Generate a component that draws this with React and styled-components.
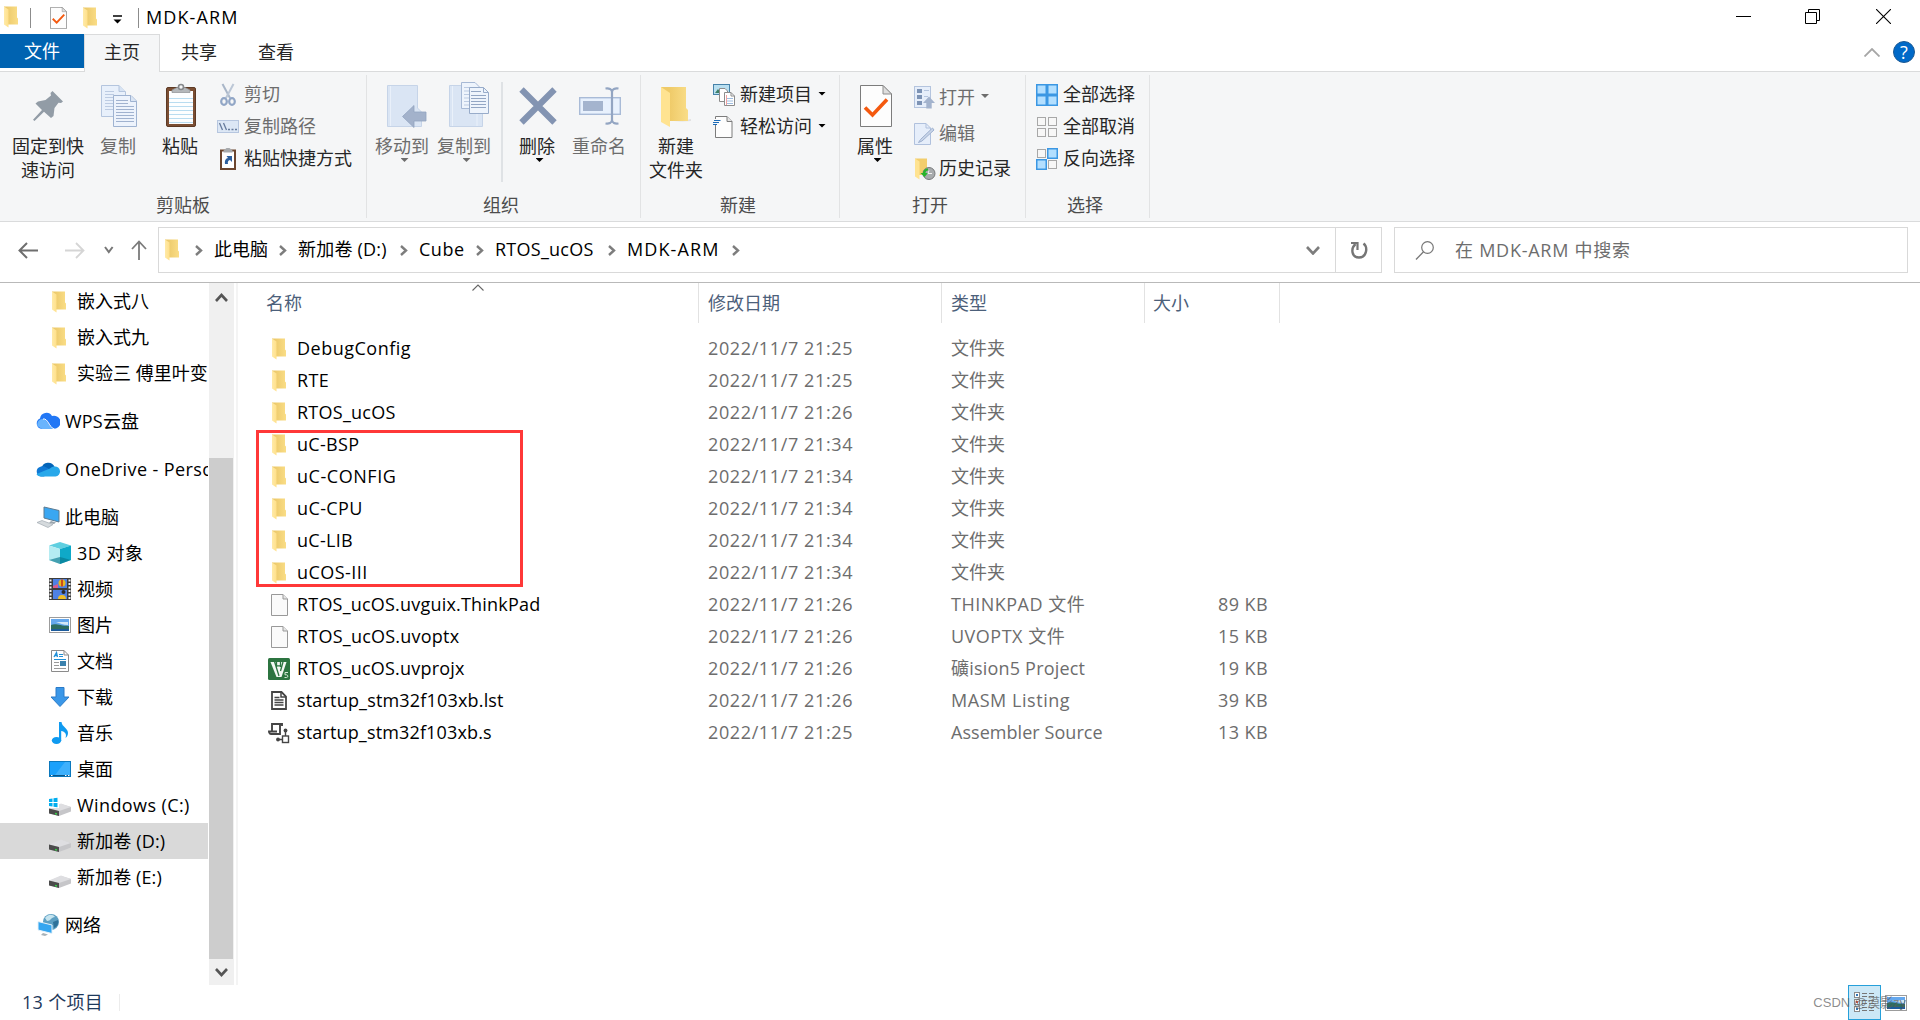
import React from 'react';
import styled, { createGlobalStyle } from 'styled-components';

const GlobalStyle = createGlobalStyle`
  * {
    box-sizing: border-box;
  }

  body {
    margin: 0;
    background: #fff;
    overflow: hidden;
  }

  svg {
    display: block;
    flex: none;
  }
`;

const Window = styled.div`
  width: 1920px;
  height: 1020px;
  display: flex;
  flex-direction: column;
  background: #fff;
  color: #000;
  font-family: 'Open Sans', 'Noto Sans CJK SC', sans-serif;
  font-size: 18px;
  line-height: 24px;
  white-space: nowrap;
  overflow: hidden;
`;

/* ---------- title bar ---------- */

const TitleBar = styled.header`
  height: 34px;
  flex: none;
  display: flex;
  align-items: center;
  padding-left: 4px;
`;

const TitleSeparator = styled.span`
  width: 1px;
  height: 20px;
  margin: 2px ${(p) => p.$right}px 0 ${(p) => p.$left}px;
  background: #8c8c8c;
`;

const QuickIcon = styled.span`
  margin: ${(p) => p.$top ?? 2}px ${(p) => p.$right || 0}px 0 0;
`;

const Title = styled.span`
  letter-spacing: ${(p) => p.$track || 0}px;
`;

const WindowButtons = styled.div`
  margin-left: auto;
  display: flex;
  padding: 0 29px 1px 0;
`;

const WindowButton = styled.span`
  margin-left: ${(p) => p.$left || 0}px;
`;

/* ---------- tabs ---------- */

const TabBar = styled.nav`
  height: 38px;
  flex: none;
  display: flex;
  align-items: flex-start;
  border-bottom: 1px solid #dadbdc;
`;

const FileTab = styled.div`
  width: 84px;
  height: 34px;
  background: #0063b1;
  color: #fff;
  text-align: center;
  line-height: 35px;
`;

const Tab = styled.div`
  width: ${(p) => p.$width}px;
  height: 38px;
  line-height: 35px;
  text-align: center;
  color: #262626;
  border: 1px solid ${(p) => (p.$active ? '#dadbdc' : 'transparent')};
  border-bottom: 0;
  background: ${(p) => (p.$active ? '#f5f6f7' : 'transparent')};
`;

const TabTools = styled.div`
  margin: 7px 5px 0 auto;
  display: flex;
  align-items: center;
  gap: 13px;
`;

const HelpBadge = styled.span`
  width: 22px;
  height: 22px;
  border-radius: 50%;
  border: 1px solid #1d5a94;
  background: #0069c8;
  color: #fff;
  font-size: 18px;
  line-height: 20px;
  text-align: center;
`;

/* ---------- ribbon ---------- */

const Ribbon = styled.section`
  height: 150px;
  flex: none;
  display: flex;
  background: #f5f6f7;
  border-bottom: 1px solid #dadbdc;
  padding: 3px 0;
`;

const Group = styled.div`
  width: ${(p) => p.$width}px;
  display: flex;
  flex-direction: column;
  border-right: 1px solid #e2e3e4;
`;

const GroupBody = styled.div`
  height: 118px;
  display: flex;
  padding: 4px 0 0 ${(p) => p.$left}px;
`;

const GroupLabel = styled.div`
  padding-right: ${(p) => p.$inset || 0}px;
  text-align: center;
  color: #4c4c4c;
`;

const BigButton = styled.div`
  width: ${(p) => p.$width}px;
  flex: none;
  display: flex;
  flex-direction: column;
  align-items: center;
  padding-top: 3px;
  color: ${(p) => (p.$off ? '#6d6d6d' : '#262626')};
`;

const BigIcon = styled.div`
  height: 52px;
  padding-left: ${(p) => p.$inset || 0}px;
`;

const BigLabel = styled.div`
  text-align: center;
  white-space: pre-line;
`;

const Caret = styled.i`
  width: 8px;
  height: 4px;
  margin: ${(p) => p.$margin || '0'};
  background: ${(p) => (p.$off ? '#6d6d6d' : '#000')};
  clip-path: polygon(0 0, 100% 0, 50% 100%);
`;

const Divider = styled.div`
  width: 2px;
  height: 100px;
  margin: 3px 4px 0 7px;
  background: #dfe2e5;
`;

const SmallColumn = styled.div`
  margin-left: ${(p) => p.$left}px;
`;

const SmallButton = styled.div`
  height: ${(p) => p.$height || 32}px;
  display: flex;
  align-items: center;
  gap: ${(p) => p.$gap || 5}px;
  color: ${(p) => (p.$off ? '#6d6d6d' : '#262626')};
`;

const SmallLabel = styled.span`
  padding-bottom: 2px;
`;

/* ---------- address row ---------- */

const NavRow = styled.div`
  height: 61px;
  flex: none;
  display: flex;
  align-items: flex-start;
  padding-top: 5px;
  border-bottom: 1px solid #b9b9b9;
`;

const NavArrows = styled.div`
  width: 158px;
  height: 46px;
  display: flex;
  align-items: center;
  padding-left: 18px;
`;

const AddressBox = styled.div`
  width: 1224px;
  height: 46px;
  display: flex;
  align-items: center;
  border: 1px solid #d9d9d9;
  padding-left: 6px;
`;

const Crumb = styled.span`
  width: ${(p) => p.$width}px;
  padding-bottom: 2px;
  letter-spacing: ${(p) => p.$track || 0}px;
`;

const CrumbChevron = styled.span`
  width: ${(p) => p.$width || 16}px;
  padding-top: ${(p) => p.$top ?? 1}px;
`;

const AddressTools = styled.div`
  margin-left: auto;
  height: 44px;
  display: flex;
  align-items: center;
`;

const Refresh = styled.div`
  width: 46px;
  height: 44px;
  margin-left: 15px;
  display: flex;
  align-items: center;
  justify-content: center;
  border-left: 1px solid #d9d9d9;
`;

const SearchBox = styled.div`
  width: 514px;
  height: 46px;
  margin-left: 12px;
  padding-left: 20px;
  display: flex;
  align-items: center;
  gap: 20px;
  border: 1px solid #d9d9d9;
  color: #6d6d6d;
  letter-spacing: 0.75px;
`;

/* ---------- body ---------- */

const Body = styled.main`
  height: 702px;
  flex: none;
  display: flex;
`;

const Tree = styled.aside`
  width: 208px;
  height: 702px;
  overflow: hidden;
`;

const TreeRow = styled.div`
  height: 36px;
  display: flex;
  align-items: center;
  margin-top: ${(p) => (p.$spaced ? 12 : 0)}px;
  padding-left: ${(p) => (p.$root ? 36 : 48)}px;
  background: ${(p) => (p.$selected ? '#d9d9d9' : 'transparent')};
`;

const TreeIcon = styled.div`
  width: 29px;
  flex: none;
  padding: ${(p) => (p.$folder ? '1px 0 0 4px' : '0')};
`;

const TreeText = styled.span`
  letter-spacing: ${(p) => p.$track || 0}px;
`;

const ScrollBar = styled.div`
  width: 25px;
  height: 702px;
  margin-left: 1px;
  display: flex;
  flex-direction: column;
  align-items: center;
  justify-content: space-between;
  padding: 10px 1px 8px 0;
  background: #f0f0f0;
`;

const Thumb = styled.div`
  width: 24px;
  height: 501px;
  margin: auto 0 9px;
  background: #cdcdcd;
`;

const Splitter = styled.div`
  width: 2px;
  margin-left: 2px;
  background: #f4f4f4;
`;

const FileArea = styled.section`
  position: relative;
  flex: 1;
`;

const HeaderRow = styled.div`
  height: 40px;
  display: flex;
  color: #4c607a;
`;

const HeaderCell = styled.div`
  width: ${(p) => p.$width}px;
  height: 40px;
  line-height: 40px;
  padding-left: ${(p) => p.$left}px;
  border-right: 1px solid #e2e2e2;
`;

const SortMark = styled.span`
  position: absolute;
  left: 234px;
  top: 1px;
`;

const Rows = styled.div`
  padding-top: 9px;
`;

const FileRow = styled.div`
  height: 32px;
  display: grid;
  grid-template-columns: 29px 411px 243px 203px 114px;
  align-items: center;
  padding-left: 30px;
  color: #6d6d6d;
`;

const FileIcon = styled.span`
  width: 22px;
  padding-top: 1px;
  display: flex;
  justify-content: center;
`;

const FileName = styled.span`
  color: #000;
  letter-spacing: ${(p) => p.$track}px;
`;

const FileDate = styled.span`
  letter-spacing: 0.62px;
`;

const FileType = styled.span`
  letter-spacing: ${(p) => p.$track || 0}px;
`;

const FileSize = styled.span`
  text-align: right;
  letter-spacing: 0.4px;
`;

const Highlight = styled.div`
  position: absolute;
  left: 18px;
  top: 147px;
  width: 267px;
  height: 157px;
  border: 3px solid #ff3838;
`;

/* ---------- status bar ---------- */

const StatusBar = styled.footer`
  position: relative;
  height: 35px;
  flex: none;
  display: flex;
  align-items: center;
  color: #1e395b;
  padding-left: 22px;
`;

const ItemCount = styled.span`
  padding-bottom: 2px;
  letter-spacing: 0.3px;
`;

const StatusDivider = styled.span`
  width: 1px;
  height: 17px;
  margin-left: 16px;
  background: #ececec;
`;

const ViewButtons = styled.div`
  margin-left: auto;
  height: 35px;
  display: flex;
  align-items: center;
  gap: 3px;
  padding-right: 12px;
`;

const DetailsView = styled.span`
  width: 33px;
  height: 35px;
  display: flex;
  align-items: center;
  justify-content: center;
  background: #cce8f6;
  border: 1px solid #26a0da;
`;

const Watermark = styled.span`
  position: absolute;
  right: 14px;
  top: 6px;
  font-family: 'Liberation Sans', 'Noto Sans CJK SC', sans-serif;
  font-size: 13px;
  color: rgba(90, 90, 90, 0.7);
`;

/* ---------- icons ---------- */

const Svg = ({ w, h, children, vw, vh }) => (
  <svg width={w} height={h} viewBox={`0 0 ${vw || w} ${vh || h}`} fill="none">
    {children}
  </svg>
);

const FolderIcon = () => (
  <Svg w={15} h={22}>
    <defs>
      <linearGradient id="folderBack" x1="0" x2="1">
        <stop offset="0" stopColor="#e9c565" />
        <stop offset="1" stopColor="#fadd86" />
      </linearGradient>
      <linearGradient id="folderFront" x1="0" x2="1">
        <stop offset="0" stopColor="#ffeaa8" />
        <stop offset="1" stopColor="#ffe08a" />
      </linearGradient>
    </defs>
    <path d="M0 0.5H13V11.5L14 12.5V18.5H4L0 8Z" fill="url(#folderBack)" />
    <path d="M0 0.5L4.5 3.5V21.5L0 18.5Z" fill="url(#folderFront)" />
  </Svg>
);

const PageIcon = () => (
  <Svg w={17} h={22}>
    <path d="M0.5 0.5H12L16.5 5V21.5H0.5Z" fill="#fafafa" stroke="#999" />
    <path d="M12 0.5V5H16.5" fill="#e6e6e6" stroke="#999" />
  </Svg>
);

const CheckPage = ({ w, h }) => (
  <Svg w={w} h={h} vw={32} vh={42}>
    <path d="M0.7 0.7H23L31.3 9V41.3H0.7Z" fill="#fdfdfd" stroke="#7c7c7c" strokeWidth="1.3" />
    <path d="M23 0.7V9H31.3Z" fill="#dedede" stroke="#8e8e8e" />
    <path d="M5 22.5L12.5 30L27 14.5" stroke="#f4590f" strokeWidth="3.6" />
  </Svg>
);

const PropertiesIcon = () => (
  <Svg w={32} h={48}>
    <path d="M0.5 3.5H23L31.5 12V44.5H0.5Z" fill="#fdfdfd" stroke="#7c7c7c" />
    <path d="M23 3.5V12H31.5Z" fill="#dedede" stroke="#8e8e8e" />
    <path d="M5 25.5L12.5 33L27 17.5" stroke="#f4590f" strokeWidth="3.6" />
  </Svg>
);

const PinIcon = () => (
  <Svg w={30} h={48}>
    <path d="M19.5 9L30 19.5L28 21L25.5 20.8L21.5 26L20.5 34L18 36L11 29.8L1.5 39L0 37.8L9 28L2.5 21.5L5 19.5L12.5 18L18 13.5L17.5 11Z" fill="#929ca6" />
  </Svg>
);

const Lines = ({ x, y, w, n, step, color }) =>
  Array.from({ length: n }, (_, i) => (
    <path key={i} d={`M${x} ${y + i * step}h${w}`} stroke={color} />
  ));

const CopyIcon = () => (
  <Svg w={36} h={48}>
    <path d="M0.5 3.5H18L24.5 10V34.5H0.5Z" fill="#e8f0fb" stroke="#b4c5de" />
    <path d="M18 3.5V9.5H24.5" fill="#d7e3f3" stroke="#b4c5de" />
    <Lines x={4} y={9.5} w={9} n={7} step={3} color="#bccbe2" />
    <path d="M12.5 13.5H30L35.5 19V44.5H12.5Z" fill="#edf3fc" stroke="#9fb3d1" />
    <path d="M29.5 13.5V19.5H35.5" fill="#dae5f4" stroke="#9fb3d1" />
    <Lines x={15} y={18.5} w={12} n={2} step={3} color="#a0b2cf" />
    <Lines x={15} y={24.5} w={18} n={6} step={3} color="#a0b2cf" />
  </Svg>
);

const PasteIcon = () => (
  <Svg w={30} h={48}>
    <rect x="0.5" y="5.5" width="29" height="39" rx="1.5" fill="#7b4e33" stroke="#5d3a25" />
    <rect x="3" y="9" width="24" height="33" fill="#fdfeff" />
    <Lines x={3} y={16.5} w={24} n={7} step={4} color="#b9dcf0" />
    <path d="M6 10.5V8L11 5.5H19L24 8V10.5Z" fill="#b5b8bb" stroke="#8d8f92" strokeWidth="0.7" />
    <circle cx="15" cy="5" r="2.5" fill="#f5f6f7" stroke="#85888b" strokeWidth="1.6" />
  </Svg>
);

const CutIcon = () => (
  <Svg w={22} h={24}>
    <path d="M5.500 1L13 15" stroke="#a9b6c8" strokeWidth="2" />
    <path d="M16.500 1L9 15" stroke="#bcc7d6" strokeWidth="2" />
    <ellipse cx="7" cy="18.500" rx="2.800" ry="3.400" stroke="#91a6c6" strokeWidth="2.200" />
    <ellipse cx="15" cy="18.500" rx="2.800" ry="3.400" stroke="#91a6c6" strokeWidth="2.200" />
  </Svg>
);

const PathIcon = () => (
  <Svg w={22} h={14}>
    <rect x="0.5" y="0.5" width="21" height="12" fill="#dce7f5" stroke="#b6c6df" />
    <path d="M2.500 3L5.500 10M6.500 3L9.500 10" stroke="#667b9c" strokeWidth="1.300" />
    <path d="M11 9.500h2M14.500 9.500h2M18 9.500h2" stroke="#667b9c" strokeWidth="1.600" />
  </Svg>
);

const PasteLinkIcon = () => (
  <Svg w={22} h={24}>
    <rect x="4" y="3.500" width="14" height="18.500" fill="#fff" stroke="#6b452e" strokeWidth="2" />
    <path d="M6.500 5.500V3.500L9.500 1H12.500L15.500 3.500V5.500Z" fill="#a7aaad" />
    <path d="M8 17C7.500 13 9 11.500 11 11L9.500 9H15V15L13 13C11 13.500 10.500 15 11 17Z" fill="#2c5f9e" />
  </Svg>
);

const MoveIcon = () => (
  <Svg w={40} h={48}>
    <path d="M0.500 3.500H30.500V26L34.500 30V44.500H0.500Z" fill="#dae5f4" stroke="#c6d4e8" />
    <path d="M3.500 4V44" stroke="#e9f0fa" />
    <path d="M15.500 34.500L27 23.500V30H39V39H27V45.500Z" fill="#a3b2cb" stroke="#93a4c0" strokeWidth="0.800" />
  </Svg>
);

const CopyToIcon = () => (
  <Svg w={40} h={48}>
    <path d="M0.500 3.500H26.500V24H33.500V44.500H0.500Z" fill="#dae5f4" stroke="#c6d4e8" />
    <path d="M3.500 4V44M28 32V44" stroke="#eaf1fa" />
    <path d="M12.500 0.500H26L31.500 6V26.500H12.500Z" fill="#eef4fc" stroke="#a7b9d5" />
    <Lines x={15} y={5.5} w={9} n={6} step={3.5} color="#bccbe2" />
    <path d="M20.500 5.500H34.500L39.500 10.500V31.500H20.500Z" fill="#eef4fc" stroke="#98acca" />
    <path d="M34.500 5.500V10.500H39.500" stroke="#98acca" />
    <Lines x={22} y={9.5} w={10} n={1} step={3} color="#93a6c4" />
    <Lines x={22} y={13.5} w={15} n={5} step={3} color="#93a6c4" />
  </Svg>
);

const DeleteIcon = () => (
  <Svg w={38} h={48}>
    <path d="M2.500 7.500L35.500 40.500M35.500 7.500L2.500 40.500" stroke="#8394b2" strokeWidth="6.200" />
  </Svg>
);

const RenameIcon = () => (
  <Svg w={42} h={48}>
    <rect x="0.700" y="15.700" width="40.600" height="16.600" fill="#e8f1fd" stroke="#a9bbd7" strokeWidth="1.400" />
    <rect x="4" y="19" width="20" height="10" fill="#a4b4ce" />
    <path d="M26.500 6.500C30 6 33 7 33 10C33 7 36 6 39.500 6.500M33 9V39M26.500 41.500C30 42 33 41 33 38C33 41 36 42 39.500 41.500" stroke="#93a5c2" strokeWidth="2.200" />
  </Svg>
);

const BigFolder = () => (
  <Svg w={32} h={48}>
    <defs>
      <linearGradient id="bigBack" x1="0" x2="1">
        <stop offset="0.300" stopColor="#efca68" />
        <stop offset="1" stopColor="#f9dd88" />
      </linearGradient>
    </defs>
    <path d="M22 39L31 37V39L14 40Z" fill="#e2e2e2" />
    <path d="M1 5H26V26L28 28V39H9L1 20Z" fill="url(#bigBack)" />
    <path d="M1 5L10 11V45L1 40Z" fill="#ffe391" />
  </Svg>
);

const NewItemIcon = () => (
  <Svg w={22} h={22}>
    <rect x="0.500" y="0.500" width="16" height="10" fill="#b9dff0" stroke="#4682a9" />
    <path d="M2 9L5 5L8 9Z" fill="#3d7f68" />
    <path d="M6.500 4.500H12L14.500 7V17.500H6.500Z" fill="#fff" stroke="#8c8c8c" />
    <path d="M11.500 8.500H18L21.500 12V21.500H11.500Z" fill="#fff" stroke="#8c8c8c" />
    <path d="M18 8.500V12H21.500" stroke="#8c8c8c" />
    <Lines x={13} y={14.5} w={7} n={3} step={2.5} color="#9fbde0" />
    <path d="M13.500 11V21" stroke="#f0a0a0" />
  </Svg>
);

const EasyAccessIcon = () => (
  <Svg w={22} h={22}>
    <path d="M2.500 0.500H14L19 5.500V21.500H2.500Z" fill="#fdfdfd" stroke="#7c7c7c" />
    <path d="M14 0.500V5.500H19" stroke="#7c7c7c" fill="#e5e5e5" />
    <path d="M1 3h5v6h-5z" fill="#f9f9fa" />
    <path d="M1 4.500h6.500M0 6.500h6M0 8.500h4" stroke="#1a6bb8" strokeWidth="1.200" />
  </Svg>
);

const OpenIcon = () => (
  <Svg w={22} h={23}>
    <rect x="0.500" y="0.500" width="16" height="21" fill="#e6eefa" stroke="#b4c4de" />
    <path d="M3 3h5v4h-5zM3 9h5v4h-5zM3 15h5v4h-5z" fill="#7d93b5" />
    <path d="M10 4.500h5M10 10.500h4" stroke="#b4c4de" />
    <path d="M15 10.500L21 17H17.700V22.500H12.300V17H9Z" fill="#a3b3cd" />
  </Svg>
);

const EditIcon = () => (
  <Svg w={22} h={22}>
    <path d="M0.500 0.500H12L16.500 5V21.500H0.500Z" fill="#e6eefa" stroke="#b0c1dd" />
    <path d="M12 0.500V5H16.500" stroke="#b0c1dd" />
    <path d="M18.500 5L6.500 16.500L4.500 19.500L8 18L20 7Z" fill="#c9d5e8" stroke="#9db0cf" />
  </Svg>
);

const HistoryIcon = () => (
  <Svg w={22} h={22}>
    <path d="M1 0.500H13V17H5Z" fill="#f2cd6c" />
    <path d="M1 0.500L5.500 3.500V21.500L1 18.500Z" fill="#ffe391" />
    <circle cx="15" cy="15.500" r="6" fill="#a8abad" stroke="#77797b" />
    <path d="M12 15.500h6M15 12.500l-1 3" stroke="#f2f2f2" />
    <path d="M14 10.500C10.500 10.500 9 13 9 15H6.500L10.500 19L14 15H11.500C11.500 13.500 12.500 12.500 14 12.500Z" fill="#27b42c" />
  </Svg>
);

const SelectIcon = ({ on }) => (
  <Svg w={22} h={22}>
    {[0, 1, 2, 3].map((i) => {
      const active = on.includes(i);
      return (
        <rect
          key={i}
          x={(i % 2) * 11 + (active ? 0.75 : 1.5)}
          y={Math.floor(i / 2) * 11 + (active ? 0.75 : 1.5)}
          width={active ? 9.5 : 8}
          height={active ? 9.5 : 8}
          fill={active ? '#b3dfff' : '#f7f7f7'}
          stroke={active ? '#3b97e3' : '#a8a8a8'}
          strokeWidth={active ? 1.5 : 1}
        />
      );
    })}
  </Svg>
);

const Chevron = ({ d, w, h, color = '#7d7d7d', sw = 2 }) => (
  <Svg w={w} h={h}>
    <path d={d} stroke={color} strokeWidth={sw} />
  </Svg>
);

const WpsIcon = () => (
  <Svg w={24} h={24}>
    <path d="M6 20A5.500 5.500 0 0 1 4 9.500A6.500 6.500 0 0 1 16 7A6.500 6.500 0 0 1 20 19.500Z" fill="#2277f5" />
    <path d="M1.500 17A5.500 5.500 0 0 1 6 10C11 9 13 17 17 20H6Z" fill="#69b4fd" />
    <path d="M7 10C12 9 13 18 18 20" stroke="#fff" strokeWidth="1" />
  </Svg>
);

const OneDriveIcon = () => (
  <Svg w={24} h={24}>
    <path d="M5.500 11A7 7 0 0 1 18.500 9.500L16 16Z" fill="#0364b8" />
    <path d="M5 19.500A5 5 0 0 1 4.500 9.700C8 8.500 10 10 16 14L8 19.500Z" fill="#0f78d4" />
    <path d="M18.500 9.500A5 5 0 0 1 19.500 19.500H5C2.500 19.500 1 18.500 0.500 17L14 11.500C15.500 10 17 9.500 18.500 9.500Z" fill="#28a8ea" />
  </Svg>
);

const PcIcon = () => (
  <Svg w={24} h={24}>
    <path d="M8 2L23 5.500V17L8 13Z" fill="#3aa7f2" stroke="#5d7a90" />
    <path d="M15 16L20 17.500L18 19L13 18Z" fill="#9aa5ad" />
    <path d="M1 17.500L6 15.500L17 19.500L12 22.500Z" fill="#d5dadd" stroke="#a2abb1" strokeWidth="0.700" />
  </Svg>
);

const CubeIcon = () => (
  <Svg w={24} h={24}>
    <path d="M12 1L23 4.500L12 8L1 4.500Z" fill="#5fcfe0" />
    <path d="M1 4.500L12 8V23L1 19Z" fill="#b5ecf2" />
    <path d="M23 4.500L12 8V23L23 19Z" fill="#0fa9c8" />
    <path d="M12 16L23 19L12 23L1 19Z" fill="#08788d" opacity="0.650" />
  </Svg>
);

const VideoIcon = () => (
  <Svg w={24} h={24}>
    <rect x="1" y="1" width="22" height="22" fill="#3d3d3d" />
    <rect x="5" y="2" width="14" height="9" fill="#4f81e4" />
    <rect x="5" y="13" width="14" height="9" fill="#4f81e4" />
    <path d="M2.500 2.500V22M21.500 2.500V22" stroke="#f2f2f2" strokeWidth="2" strokeDasharray="2 1.500" />
    <circle cx="14" cy="6" r="3.500" fill="#e8b820" />
    <path d="M14 2.500V9.500" stroke="#c52a1a" strokeWidth="1.500" />
    <path d="M5 9L10 7V11H5Z" fill="#da5d8c" />
    <circle cx="15.500" cy="15" r="2" fill="#2a2a2a" />
    <path d="M10 22A4 4 0 0 1 18 22Z" fill="#f0be24" />
  </Svg>
);

const PictureIcon = () => (
  <Svg w={24} h={18}>
    <rect x="1.500" y="1.500" width="21" height="15" fill="#fff" stroke="#9c9c9c" />
    <rect x="3" y="3" width="18" height="12" fill="#65a8ee" />
    <path d="M3 9C8 7 12 10 21 10V15H3Z" fill="#2d6d62" />
    <path d="M8 6h12v3c-5 0-8-2-12-3z" fill="#d3e8f7" />
    <path d="M3 13h18v2H3Z" fill="#1d5c9c" />
  </Svg>
);

const DocumentIcon = () => (
  <Svg w={24} h={24}>
    <path d="M3.500 1.500H16L20.500 6V22.500H3.500Z" fill="#fff" stroke="#8b8b8b" />
    <path d="M16 1.500V6H20.500" stroke="#8b8b8b" />
    <path d="M6 8L8.500 3.500L9.500 8M7 6.500H9" stroke="#2090d8" strokeWidth="1.300" />
    <path d="M11 5.500h4M11 7.500h4M6 10.500h12" stroke="#2090d8" />
    <path d="M6 13.500h5M6 16.500h5M6 19.500h12" stroke="#9a9a9a" />
    <rect x="12" y="12" width="6" height="5" fill="#3b81ad" />
  </Svg>
);

const DownloadIcon = () => (
  <Svg w={24} h={24}>
    <path d="M8 2.500H16V12H21L12 21.500L3 12H8Z" fill="#3a97e8" stroke="#2a7bc8" />
  </Svg>
);

const MusicIcon = () => (
  <Svg w={24} h={24}>
    <ellipse cx="8.500" cy="19.500" rx="4.700" ry="3.500" fill="#0f9af0" />
    <path d="M11 1H13.500C14 6 20 7 20 12C20 14.500 18.500 16.500 17.500 17C19 13 17 10.500 13.200 10V20H11Z" fill="#0f9af0" />
  </Svg>
);

const DesktopIcon = () => (
  <Svg w={24} h={18}>
    <rect x="1.500" y="1.500" width="21" height="15" fill="#1ba1fb" stroke="#0b78bd" />
    <path d="M7 15L17 2H22V15Z" fill="#3eb0fc" />
    <path d="M2 15.500H22" stroke="#0a5587" />
    <path d="M3 15.500h1.500M17 15.500h1.500M20 15.500h1.500" stroke="#fff" />
  </Svg>
);

const DriveIcon = ({ system }) => (
  <Svg w={24} h={24}>
    <path d="M1 16L13 11L23 14V18.500L11 23L1 20Z" fill="#c6c6c9" />
    <path d="M1 15.500L13 10.500L23 14L11 18Z" fill="#dedee1" />
    <path d="M1 15.500L11 18V23L1 20.500Z" fill="#4b4b4b" />
    <path d="M7 20.500l2 0.500" stroke="#38d04b" strokeWidth="1.500" />
    {system && (
      <>
        <rect x="0" y="4" width="11" height="11" fill="#fff" />
        <path d="M1 6l3.500-.5v3.500H1zM5.500 5.300l4-.600v4.300h-4zM1 10h3.500v3.500L1 13zM5.500 10h4v4.300l-4-.600z" fill="#00adef" />
      </>
    )}
  </Svg>
);

const NetworkIcon = () => (
  <Svg w={24} h={24}>
    <circle cx="15" cy="9" r="8" fill="#5c9fc2" />
    <path d="M9 5C12 1 17 1 19 4C15 4 15 8 11 8Z" fill="#c5e4ef" />
    <path d="M17 9L22 7C23 11 21 14 18 15Z" fill="#2e7199" />
    <path d="M2 8.500L16 12V20.500L2 17Z" fill="#35a6f0" stroke="#e8f3f9" />
    <path d="M7 20L12 21.500L9 23L5 22Z" fill="#a8b2b8" />
  </Svg>
);

const KeilIcon = () => (
  <Svg w={22} h={22}>
    <rect width="22" height="22" rx="1.500" fill="#2c7440" />
    <path d="M2.500 4H18.500L13.500 19H8.500Z" fill="#f4f8f4" />
    <path d="M6.500 3.500L11 18M8.500 4V9M12.500 4V9M8.500 7.800H12.500M15 4L12.500 13" stroke="#2c7440" strokeWidth="1.300" />
    <path d="M20 14.500H17V16.800H18.500C20.300 17 20.300 19.500 18.500 19.500H16.500" stroke="#d3e8d5" />
  </Svg>
);

const ListingIcon = () => (
  <Svg w={16} h={19}>
    <path d="M1 1H10.500L15 5.500V18H1Z" stroke="#454545" strokeWidth="1.800" />
    <path d="M10 1V6H15" stroke="#454545" strokeWidth="1.500" />
    <path d="M3.500 6.500h5M3.500 9h9M3.500 11.500h9M3.500 14h9" stroke="#454545" strokeWidth="1.300" />
  </Svg>
);

const AssemblerIcon = () => (
  <Svg w={22} h={22}>
    <path d="M4 10V2H14V4M12 2V12H3C1 12 1 9.500 1 9.500H9" stroke="#454545" strokeWidth="1.900" />
    <rect x="14.500" y="14" width="6" height="6.500" stroke="#454545" strokeWidth="1.400" />
    <path d="M17.500 9V14M10 17.500H14" stroke="#454545" strokeWidth="1.400" />
    <circle cx="17.500" cy="8.500" r="1.900" fill="#454545" />
    <circle cx="10" cy="17.500" r="1.900" fill="#454545" />
  </Svg>
);

const DetailsIcon = () => (
  <Svg w={23} h={21}>
    {[0.5, 7.5, 14.5].map((y) => (
      <g key={y}>
        <rect x="1.500" y={y} width="5" height="5" fill="#fff" stroke="#8a8a8a" />
        <path d={`M9 ${y + 1}h5M16 ${y + 1}h5M9 ${y + 4}h5M16 ${y + 4}h5`} stroke="#777" />
      </g>
    ))}
    <path d="M3 3h2M3 17h2" stroke="#3277b5" strokeWidth="2" />
    <path d="M3 10h2" stroke="#c6533b" strokeWidth="2" />
  </Svg>
);

/* ---------- data ---------- */

const tree = [
  { text: '嵌入式八', folder: true },
  { text: '嵌入式九', folder: true },
  { text: '实验三 傅里叶变换', folder: true },
  { text: 'WPS云盘', icon: <WpsIcon />, root: true, track: 0.2 },
  { text: 'OneDrive - Personal', icon: <OneDriveIcon />, root: true, track: 0.4 },
  { text: '此电脑', icon: <PcIcon />, root: true },
  { text: '3D 对象', icon: <CubeIcon />, track: 0.5 },
  { text: '视频', icon: <VideoIcon /> },
  { text: '图片', icon: <PictureIcon /> },
  { text: '文档', icon: <DocumentIcon /> },
  { text: '下载', icon: <DownloadIcon /> },
  { text: '音乐', icon: <MusicIcon /> },
  { text: '桌面', icon: <DesktopIcon /> },
  { text: 'Windows (C:)', icon: <DriveIcon system />, track: 0.4 },
  { text: '新加卷 (D:)', icon: <DriveIcon />, selected: true, track: 0.15 },
  { text: '新加卷 (E:)', icon: <DriveIcon />, track: 0.1 },
  { text: '网络', icon: <NetworkIcon />, root: true },
];

const files = [
  { name: 'DebugConfig', track: 0.5, date: '2022/11/7 21:25', type: '文件夹' },
  { name: 'RTE', track: 0.4, date: '2022/11/7 21:25', type: '文件夹' },
  { name: 'RTOS_ucOS', track: 0.25, date: '2022/11/7 21:26', type: '文件夹' },
  { name: 'uC-BSP', track: 0.3, date: '2022/11/7 21:34', type: '文件夹' },
  { name: 'uC-CONFIG', track: 0.55, date: '2022/11/7 21:34', type: '文件夹' },
  { name: 'uC-CPU', track: 0.4, date: '2022/11/7 21:34', type: '文件夹' },
  { name: 'uC-LIB', track: 0.3, date: '2022/11/7 21:34', type: '文件夹' },
  { name: 'uCOS-III', track: 0.45, date: '2022/11/7 21:34', type: '文件夹' },
  { name: 'RTOS_ucOS.uvguix.ThinkPad', track: 0.2, date: '2022/11/7 21:26', type: 'THINKPAD 文件', typeTrack: 0.5, size: '89 KB', icon: <PageIcon /> },
  { name: 'RTOS_ucOS.uvoptx', track: 0.22, date: '2022/11/7 21:26', type: 'UVOPTX 文件', typeTrack: 0.5, size: '15 KB', icon: <PageIcon /> },
  { name: 'RTOS_ucOS.uvprojx', track: 0.2, date: '2022/11/7 21:26', type: '礦ision5 Project', typeTrack: 0.2, size: '19 KB', icon: <KeilIcon /> },
  { name: 'startup_stm32f103xb.lst', track: 0.18, date: '2022/11/7 21:26', type: 'MASM Listing', typeTrack: 0.55, size: '39 KB', icon: <ListingIcon /> },
  { name: 'startup_stm32f103xb.s', track: 0.15, date: '2022/11/7 21:25', type: 'Assembler Source', typeTrack: 0.05, size: '13 KB', icon: <AssemblerIcon /> },
];

const crumbs = [
  { text: '此电脑', width: 65 },
  { text: '新加卷 (D:)', width: 102, track: 0.2 },
  { text: 'Cube', width: 57, track: 0.5 },
  { text: 'RTOS_ucOS', width: 113, track: 0.25 },
  { text: 'MDK-ARM', width: 105, track: 1.1 },
];

const Large = ({ width, icon, label, off, caret, inset }) => (
  <BigButton $width={width} $off={off}>
    <BigIcon $inset={inset}>{icon}</BigIcon>
    <BigLabel>{label}</BigLabel>
    {caret && <Caret $off={off} $margin="0 0 0 5px" />}
  </BigButton>
);

const Small = ({ icon, label, off, caret, height, gap }) => (
  <SmallButton $off={off} $height={height} $gap={gap}>
    {icon}
    <SmallLabel>{label}</SmallLabel>
    {caret && <Caret $off={off} $margin={`-3px 0 0 ${gap || 1}px`} />}
  </SmallButton>
);

const App = () => (
  <>
    <GlobalStyle />
    <Window>
      <TitleBar>
        <QuickIcon $top={0}><FolderIcon /></QuickIcon>
        <TitleSeparator $left={11} $right={19} />
        <QuickIcon $right={16}><CheckPage w={17} h={22} /></QuickIcon>
        <QuickIcon $right={15}><FolderIcon /></QuickIcon>
        <QuickIcon $top={5}>
          <Svg w={9} h={9}>
            <path d="M0 1h9" stroke="#000" strokeWidth="1.500" />
            <path d="M0.500 4.500H8.500L4.500 8.500Z" fill="#000" />
          </Svg>
        </QuickIcon>
        <TitleSeparator $left={16} $right={7} />
        <Title $track={1.1}>MDK-ARM</Title>
        <WindowButtons>
          <WindowButton>
            <Svg w={15} h={15}><path d="M0 7.500h15" stroke="#000" /></Svg>
          </WindowButton>
          <WindowButton $left={54}>
            <Svg w={15} h={15}>
              <path d="M0.500 3.500h11v11h-11zM3.500 3.500v-3h11v11h-3" stroke="#000" />
            </Svg>
          </WindowButton>
          <WindowButton $left={56}>
            <Svg w={15} h={15}><path d="M0 0L15 15M15 0L0 15" stroke="#000" strokeWidth="1.100" /></Svg>
          </WindowButton>
        </WindowButtons>
      </TitleBar>

      <TabBar>
        <FileTab>文件</FileTab>
        <Tab $width={76} $active>主页</Tab>
        <Tab $width={78}>共享</Tab>
        <Tab $width={76}>查看</Tab>
        <TabTools>
          <Chevron w={16} h={9} d="M0.500 8.500L8 1L15.500 8.500" color="#a6a6a6" sw={1.8} />
          <HelpBadge>?</HelpBadge>
        </TabTools>
      </TabBar>

      <Ribbon>
        <Group $width={367}>
          <GroupBody $left={8}>
            <Large width={80} icon={<PinIcon />} label={'固定到快\n速访问'} />
            <Large width={60} icon={<CopyIcon />} label="复制" off inset={2} />
            <Large width={64} icon={<PasteIcon />} label="粘贴" inset={2} />
            <SmallColumn $left={5}>
              <Small icon={<CutIcon />} label="剪切" off />
              <Small icon={<PathIcon />} label="复制路径" off />
              <Small icon={<PasteLinkIcon />} label="粘贴快捷方式" />
            </SmallColumn>
          </GroupBody>
          <GroupLabel>剪贴板</GroupLabel>
        </Group>

        <Group $width={274}>
          <GroupBody $left={3}>
            <Large width={64} icon={<MoveIcon />} label="移动到" off caret inset={10} />
            <Large width={60} icon={<CopyToIcon />} label="复制到" off caret inset={10} />
            <Divider />
            <Large width={60} icon={<DeleteIcon />} label="删除" caret inset={2} />
            <Large width={64} icon={<RenameIcon />} label="重命名" off inset={2} />
          </GroupBody>
          <GroupLabel $inset={5}>组织</GroupLabel>
        </Group>

        <Group $width={199}>
          <GroupBody $left={5}>
            <Large width={60} icon={<BigFolder />} label={'新建\n文件夹'} />
            <SmallColumn $left={7}>
              <Small icon={<NewItemIcon />} label="新建项目" caret />
              <Small icon={<EasyAccessIcon />} label="轻松访问" caret />
            </SmallColumn>
          </GroupBody>
          <GroupLabel $inset={4}>新建</GroupLabel>
        </Group>

        <Group $width={186}>
          <GroupBody $left={5}>
            <Large width={60} icon={<PropertiesIcon />} label="属性" caret inset={2} />
            <SmallColumn $left={9}>
              <Small icon={<OpenIcon />} label="打开" off caret height={37} gap={3} />
              <Small icon={<EditIcon />} label="编辑" off height={35} gap={3} />
              <Small icon={<HistoryIcon />} label="历史记录" height={35} gap={3} />
            </SmallColumn>
          </GroupBody>
          <GroupLabel $inset={5}>打开</GroupLabel>
        </Group>

        <Group $width={124}>
          <GroupBody $left={10}>
            <SmallColumn $left={0}>
              <Small icon={<SelectIcon on={[0, 1, 2, 3]} />} label="全部选择" />
              <Small icon={<SelectIcon on={[]} />} label="全部取消" />
              <Small icon={<SelectIcon on={[1, 2]} />} label="反向选择" />
            </SmallColumn>
          </GroupBody>
          <GroupLabel $inset={5}>选择</GroupLabel>
        </Group>
      </Ribbon>

      <NavRow>
        <NavArrows>
          <Svg w={47} h={17}><path d="M1 8.500H20M9 1L1.500 8.500L9 16" stroke="#6e6e6e" strokeWidth="2" /></Svg>
          <Svg w={39} h={17}><path d="M0 8.500H18M11 1L18.500 8.500L11 16" stroke="#d5d5d5" strokeWidth="1.800" /></Svg>
          <Svg w={27} h={8}><path d="M1 1L4.800 6L8.600 1" stroke="#777" strokeWidth="2" /></Svg>
          <Svg w={16} h={20}><path d="M8 20V2M1 9L8 1.500L15 9" stroke="#7b7b7b" strokeWidth="1.800" /></Svg>
        </NavArrows>
        <AddressBox>
          <CrumbChevron $width={30} $top={0}><FolderIcon /></CrumbChevron>
          <CrumbChevron $width={19}>
            <Chevron w={8} h={11} d="M1 1L6 5.500L1 10" sw={2.4} />
          </CrumbChevron>
          {crumbs.map((c) => (
            <React.Fragment key={c.text}>
              <Crumb $width={c.width} $track={c.track}>{c.text}</Crumb>
              <CrumbChevron $width={19}>
                <Chevron w={8} h={11} d="M1 1L6 5.500L1 10" sw={2.4} />
              </CrumbChevron>
            </React.Fragment>
          ))}
          <AddressTools>
            <Chevron w={14} h={9} d="M1 1L7 7.500L13 1" sw={2.6} />
            <Refresh>
              <Svg w={18} h={18}>
                <path d="M13.500 2.500C18 6 17 16.500 9 16.500C1.500 16.500 0.500 7.500 5.500 3" stroke="#757575" strokeWidth="2.400" />
                <path d="M1 2H7.500V9" stroke="#757575" strokeWidth="2.200" />
              </Svg>
            </Refresh>
          </AddressTools>
        </AddressBox>
        <SearchBox>
          <Svg w={20} h={19}>
            <circle cx="12.500" cy="6.500" r="5.800" stroke="#777" strokeWidth="1.200" />
            <path d="M8.500 10.800L1 18.500" stroke="#777" strokeWidth="1.300" />
          </Svg>
          <span>在 MDK-ARM 中搜索</span>
        </SearchBox>
      </NavRow>

      <Body>
        <Tree>
          {tree.map((t, i) => (
            <TreeRow key={t.text} $root={t.root} $selected={t.selected} $spaced={t.root && i > 0}>
              <TreeIcon $folder={t.folder}>{t.folder ? <FolderIcon /> : t.icon}</TreeIcon>
              <TreeText $track={t.track}>{t.text}</TreeText>
            </TreeRow>
          ))}
        </Tree>
        <ScrollBar>
          <Chevron w={13} h={9} d="M1 8L6.500 2L12 8" color="#555" sw={2.6} />
          <Thumb />
          <Chevron w={13} h={9} d="M1 1L6.500 7L12 1" color="#555" sw={2.6} />
        </ScrollBar>
        <Splitter />
        <FileArea>
          <HeaderRow>
            <HeaderCell $width={461} $left={28}>名称</HeaderCell>
            <HeaderCell $width={243} $left={9}>修改日期</HeaderCell>
            <HeaderCell $width={203} $left={9}>类型</HeaderCell>
            <HeaderCell $width={135} $left={8}>大小</HeaderCell>
          </HeaderRow>
          <SortMark>
            <Chevron w={12} h={7} d="M0.500 6.500L6 1L11.500 6.500" color="#666" sw={1.1} />
          </SortMark>
          <Rows>
            {files.map((f) => (
              <FileRow key={f.name}>
                <FileIcon>{f.icon || <FolderIcon />}</FileIcon>
                <FileName $track={f.track}>{f.name}</FileName>
                <FileDate>{f.date}</FileDate>
                <FileType $track={f.typeTrack}>{f.type}</FileType>
                <FileSize>{f.size}</FileSize>
              </FileRow>
            ))}
          </Rows>
          <Highlight />
        </FileArea>
      </Body>

      <StatusBar>
        <ItemCount>13 个项目</ItemCount>
        <StatusDivider />
        <ViewButtons>
          <DetailsView><DetailsIcon /></DetailsView>
          <PictureIcon />
        </ViewButtons>
        <Watermark>CSDN @漠影zy</Watermark>
      </StatusBar>
    </Window>
  </>
);

export default App;
